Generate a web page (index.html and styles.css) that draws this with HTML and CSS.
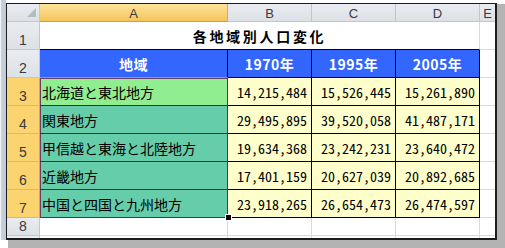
FILE: index.html
```html
<!DOCTYPE html>
<html lang="ja">
<head>
<meta charset="utf-8">
<title>各地域別人口変化</title>
<link rel="stylesheet" href="styles.css">
</head>
<body>
<div class="screen">
  <div class="strip"></div>
  <div class="window">
    <div class="sheet">
      <div class="hd corner"><svg width="9" height="9" viewBox="0 0 9 9"><polygon points="9,0 9,9 0,9" fill="#b6bbc1"/></svg></div>
      <div class="hd col sel">A</div>
      <div class="hd col">B</div>
      <div class="hd col">C</div>
      <div class="hd col">D</div>
      <div class="hd col last">E</div>

      <div class="hd row">1</div>
      <div class="title">各地域別人口変化</div>
      <div class="cell e"></div>

      <div class="hd row">2</div>
      <div class="th tha">地域</div>
      <div class="th">1970年</div>
      <div class="th">1995年</div>
      <div class="th">2005年</div>
      <div class="cell e"></div>

      <div class="hd row rsel">3</div>
      <div class="reg green top">北海道と東北地方</div>
      <div class="num">14,215,484</div>
      <div class="num">15,526,445</div>
      <div class="num">15,261,890</div>
      <div class="cell e"></div>

      <div class="hd row rsel">4</div>
      <div class="reg">関東地方</div>
      <div class="num">29,495,895</div>
      <div class="num">39,520,058</div>
      <div class="num">41,487,171</div>
      <div class="cell e"></div>

      <div class="hd row rsel">5</div>
      <div class="reg">甲信越と東海と北陸地方</div>
      <div class="num">19,634,368</div>
      <div class="num">23,242,231</div>
      <div class="num">23,640,472</div>
      <div class="cell e"></div>

      <div class="hd row rsel">6</div>
      <div class="reg">近畿地方</div>
      <div class="num">17,401,159</div>
      <div class="num">20,627,039</div>
      <div class="num">20,892,685</div>
      <div class="cell e"></div>

      <div class="hd row rsel">7</div>
      <div class="reg bottom">中国と四国と九州地方</div>
      <div class="num">23,918,265</div>
      <div class="num">26,654,473</div>
      <div class="num">26,474,597</div>
      <div class="cell e"></div>

      <div class="hd row">8</div>
      <div class="cell"></div>
      <div class="cell"></div>
      <div class="cell"></div>
      <div class="cell"></div>
      <div class="cell e"></div>

      <div class="hd row"></div>
      <div class="cell"></div>
      <div class="cell"></div>
      <div class="cell"></div>
      <div class="cell"></div>
      <div class="cell e"></div>

      <span class="handle"></span>
    </div>
  </div>
</div>
</body>
</html>
```

FILE: styles.css
```css
* { box-sizing: border-box; }
html, body { margin: 0; padding: 0; background: #ffffff; overflow: hidden; }

.screen {
  display: flex;
  align-items: flex-start;
  width: 505px;
  height: 248px;
}

.strip {
  width: 6px;
  height: 240px;
  background: linear-gradient(to right, #f2f4f7 0, #f2f4f7 1px, #c9d3df 1px, #bfcad8 100%);
}

.window {
  margin-top: 3px;
  width: 491px;
  height: 237px;
  border-top: 1px solid #1c1c1c;
  border-left: 1px solid #1c1c1c;
  border-right: 2px solid #1c1c1c;
  border-bottom: 2px solid #1c1c1c;
  box-shadow: 9px 1px 0 0 #b3b3b3, 2px 9px 0 0 #b3b3b3, 9px 9px 0 0 #b3b3b3;
  overflow: hidden;
}

.sheet {
  position: relative;
  display: grid;
  grid-template-columns: 33px 188px 84px 84px 84px 15px;
  grid-template-rows: 18px repeat(7, 28px) 18px 18px;
  height: 234px;
  overflow: hidden;
  font-family: "Noto Sans CJK JP", "Noto Sans", sans-serif;
  font-size: 14px;
  color: #000;
}

.sheet > div {
  border-right: 1px solid #d9d9d9;
  border-bottom: 1px solid #d9d9d9;
  min-width: 0;
  overflow: hidden;
  white-space: nowrap;
}

/* headers */
.hd {
  background: linear-gradient(#e9ecf0, #dde1e6);
  font-family: "Liberation Sans", Arial, sans-serif;
  color: #3a3a3a;
  display: flex;
  justify-content: center;
}
.sheet > .hd { border-right: 1px solid #c2c7cd; border-bottom: 1px solid #c2c7cd; }
.hd.col { align-items: center; font-size: 13px; padding-top: 1px; }
.hd.row { align-items: flex-end; font-size: 14px; line-height: 1; padding-bottom: 2px; }
.hd.corner { justify-content: flex-end; align-items: flex-end; padding: 0 3px 4px 0; }
.sheet > .hd.last { border-right: none; }
.sheet > .hd.sel {
  background: linear-gradient(#fde39a, #f9d177 60%, #f5c35a);
  border-right: 1px solid #e2a851;
  border-bottom: 1px solid #f0932f;
}
.sheet > .hd.rsel {
  background: #fbd470;
  border-right: 1px solid #e3a545;
  border-bottom: 1px solid #edb65a;
}

/* title */
.title {
  grid-column: 2 / 6;
  display: flex;
  align-items: center;
  justify-content: center;
  font-weight: bold;
  letter-spacing: 2.7px;
  padding-top: 1px;
}
.sheet > .title { border-bottom: 1px solid #000; border-right: 1px solid #d9d9d9; }

/* table header */
.th {
  background: #3366ff;
  color: #ffffff;
  font-weight: bold;
  display: flex;
  align-items: center;
  justify-content: center;
  letter-spacing: 0.5px;
  padding-top: 1px;
}
.sheet > .th { border-right: 1px solid #000; border-bottom: 1px solid #000; }
.sheet > .th.tha { border-bottom: 1px solid #e58f2c; }

/* region cells */
.reg {
  background: #66cdaa;
  display: flex;
  align-items: center;
  padding-left: 2px;
  box-shadow: inset 1px 0 0 #6b3d6e;
}
.reg.green { background: #90ee90; }
.sheet > .reg { border-right: 1px solid #5a2f5c; border-bottom: 1px solid #1e3a48; }
.reg.top { box-shadow: inset 1px 1px 0 #6b3d6e; }
.sheet > .reg.bottom { border-bottom: 1px solid #6b1f6e; }

/* numbers */
.num {
  background: #ffffcc;
  display: flex;
  align-items: center;
  justify-content: flex-end;
  padding-right: 4px;
  font-feature-settings: "hwid" 1;
  letter-spacing: 0;
}
.sheet > .num { border-right: 1px solid #000; border-bottom: 1px solid #000; }

.sheet > .e { border-right: none; }

.handle {
  position: absolute;
  left: 218px;
  top: 210px;
  width: 7px;
  height: 7px;
  background: #000;
  border: 1px solid #fff;
}
```
